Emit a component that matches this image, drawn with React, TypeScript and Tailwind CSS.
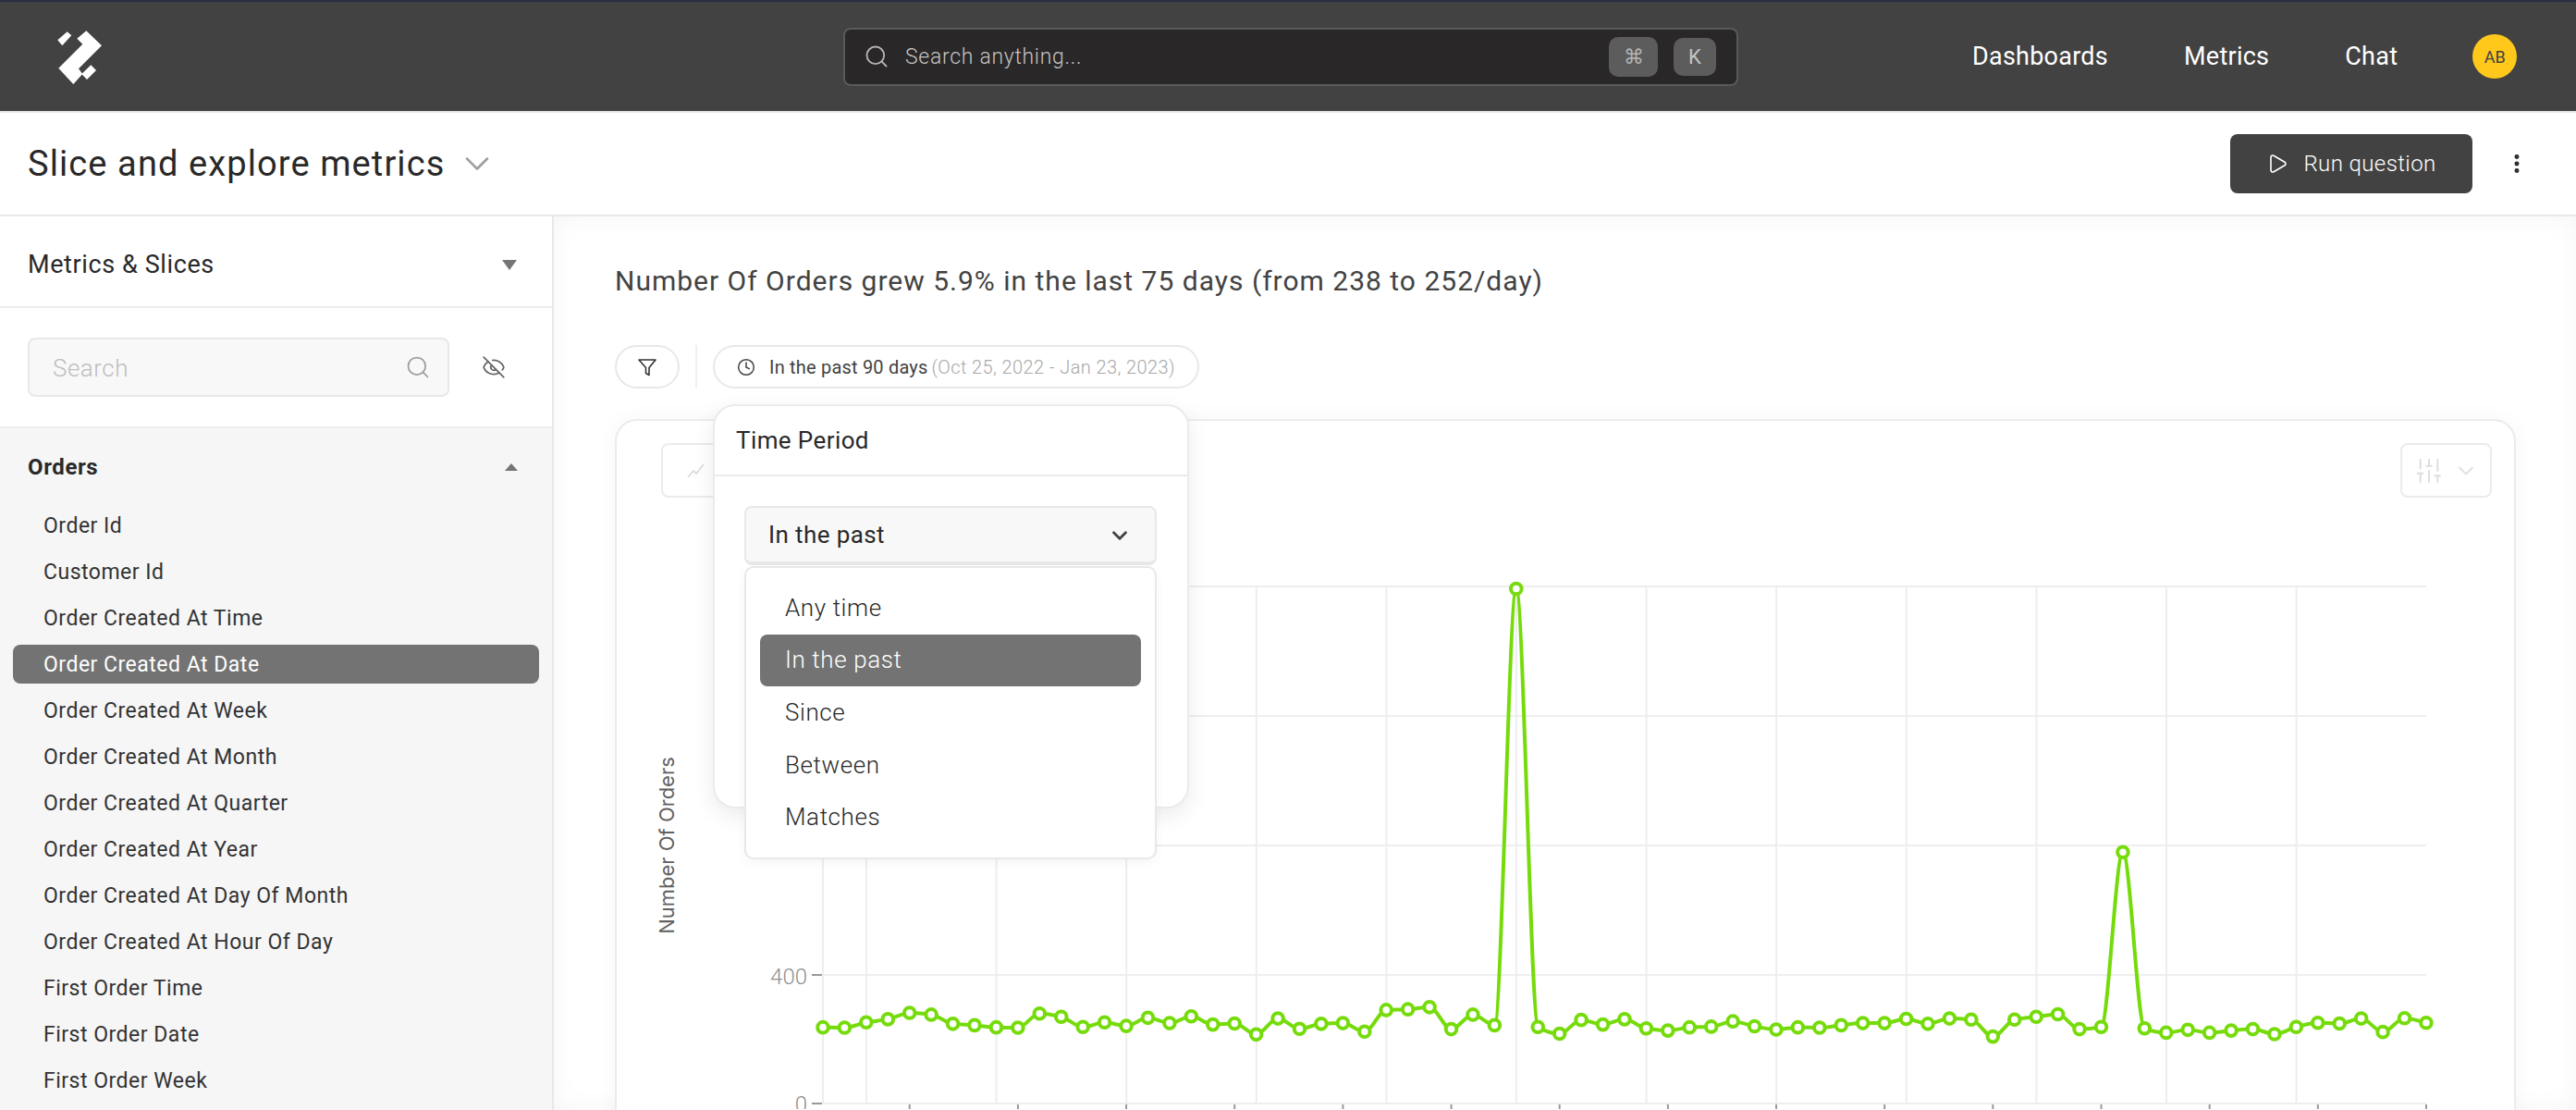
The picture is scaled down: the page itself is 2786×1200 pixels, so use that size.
import { ChevronDown, Clock, EyeOff, MoreVertical, Play, Search, SlidersVertical } from "lucide-react";

const orderFields = [
  "Order Id",
  "Customer Id",
  "Order Created At Time",
  "Order Created At Date",
  "Order Created At Week",
  "Order Created At Month",
  "Order Created At Quarter",
  "Order Created At Year",
  "Order Created At Day Of Month",
  "Order Created At Hour Of Day",
  "First Order Time",
  "First Order Date",
  "First Order Week",
];

const periods = ["Any time", "In the past", "Since", "Between", "Matches"];

// y of each day, read off the reference at a vertical zoom of 2.613
const rawY = [
  1337, 1338, 1323, 1314, 1296, 1301, 1327, 1331, 1337, 1338, 1298, 1307, 1336, 1323, 1333, 1310, 1325, 1306, 1329,
  1326, 1357, 1312, 1341, 1327, 1325, 1349, 1288, 1286, 1280, 1342, 1301, 1331, 98, 1336, 1355, 1316, 1329, 1314, 1340,
  1346, 1337, 1335, 1320, 1334, 1343, 1337, 1338, 1331, 1325, 1325, 1313, 1327, 1312, 1315, 1363, 1315, 1307, 1300,
  1342, 1336, 842, 1340, 1352, 1344, 1352, 1346, 1342, 1356, 1336, 1324, 1326, 1312, 1350, 1311, 1324,
];

const points = rawY.map((v, i) => ({ x: 890 + i * 23.432, y: 600 + v / 2.613 }));

// same shape as d3's curveMonotoneX
const monotonePath = (pts: { x: number; y: number }[]) => {
  const slopes = pts.slice(1).map((p, i) => (p.y - pts[i].y) / (p.x - pts[i].x));
  const tangents = pts.map((_, i) => {
    if (i === 0) return slopes[0];
    if (i === pts.length - 1) return slopes[i - 1];
    const a = slopes[i - 1];
    const b = slopes[i];
    if (a * b <= 0) return 0;
    return (2 * a * b) / (a + b);
  });
  let d = `M${pts[0].x} ${pts[0].y}`;
  for (let i = 1; i < pts.length; i++) {
    const h = (pts[i].x - pts[i - 1].x) / 3;
    d += `C${pts[i - 1].x + h} ${pts[i - 1].y + h * tangents[i - 1]} ${pts[i].x - h} ${pts[i].y - h * tangents[i]} ${pts[i].x} ${pts[i].y}`;
  }
  return d;
};

const gridY = [635, 775, 915, 1055, 1194];
const gridX = [890, ...Array.from({ length: 12 }, (_, i) => 937 + i * 140.6)];
const tickX = Array.from({ length: 15 }, (_, i) => 2624 - i * 117.16);

const Logo = () => (
  <svg width="110" height="100" viewBox="0 0 110 100" fill="#ffffff">
    <path d="M32.3 32.3L42.7 23.3L47.3 27.3L37.3 38.3Z" />
    <path d="M63.3 22.3L80 38.3L55 63.3L59.3 69L49.3 80L33.3 62.7L59.3 36.7L53.3 30.7Z" />
    <path d="M68.3 59.3L74 65L64 75L58.3 69Z" />
  </svg>
);

const Chart = () => (
  <svg width="2052" height="640" viewBox="667 560 2052 640" className="block">
    {gridY.map((y) => (
      <line key={y} x1="890" x2="2624" y1={y} y2={y} stroke="#eeeeee" strokeWidth="2" />
    ))}
    {gridX.map((x) => (
      <line key={x} x1={x} x2={x} y1="635" y2="1194" stroke="#eeeeee" strokeWidth="2" />
    ))}
    {tickX.map((x) => (
      <line key={x} x1={x} x2={x} y1="1195" y2="1200" stroke="#999999" strokeWidth="2" />
    ))}
    <line x1="878" x2="889" y1="1055" y2="1055" stroke="#999999" strokeWidth="2" />
    <line x1="878" x2="889" y1="1194" y2="1194" stroke="#999999" strokeWidth="2" />
    <text x="873" y="1065" textAnchor="end" fontFamily="Roboto, sans-serif" fontSize="24" fontWeight="300" fill="#8f8f8f">
      400
    </text>
    <text x="873" y="1203" textAnchor="end" fontFamily="Roboto, sans-serif" fontSize="24" fontWeight="300" fill="#8f8f8f">
      0
    </text>
    <text
      transform="translate(729 915) rotate(-90)"
      textAnchor="middle"
      fontFamily="Inter, sans-serif"
      fontSize="22"
      fill="#616161"
    >
      Number Of Orders
    </text>
    <path d={monotonePath(points)} fill="none" stroke="#76db0b" strokeWidth="4" />
    {points.map((p) => (
      <circle key={p.x} cx={p.x} cy={p.y} r="5.8" fill="#ffffff" stroke="#76db0b" strokeWidth="4" />
    ))}
  </svg>
);

const TimePeriodPopover = () => (
  <div className="absolute -left-[2px] top-[62px] z-10 h-[437px] w-[515px] rounded-[24px] border-2 border-[#ebebeb] bg-white shadow-[0_8px_24px_rgba(0,0,0,0.08)]">
    <div className="flex h-[76px] items-center border-b-2 border-[#ebebeb] pl-[23px] text-[26px] tracking-[0.4px] text-[#292929]">
      Time Period
    </div>
    <div className="relative ml-[32px] mt-[32px] flex h-[64px] w-[446px] items-center justify-between rounded-[8px] border-2 border-b-4 border-[#e8e8e8] bg-[#f8f8f8] pl-[24px] pr-[25px] pt-[1px] text-[26px] tracking-[0.4px] text-[#292929]">
      In the past
      <ChevronDown size={26} strokeWidth={2.6} className="text-[#424242]" />
      <div className="absolute -left-[2px] top-[63px] w-[446px] rounded-[10px] border-2 border-[#e8e8e8] bg-white py-[15px] shadow-[0_4px_12px_rgba(0,0,0,0.04)]">
        {periods.map((p) => (
          <div
            key={p}
            className={
              p === "In the past"
                ? "mx-[15px] flex h-[56.6px] items-center rounded-[8px] bg-[#737373] pl-[27px] font-light tracking-[0.6px] text-white"
                : "mx-[15px] flex h-[56.6px] items-center pl-[27px] font-light tracking-[0.6px] text-[#292929]"
            }
          >
            {p}
          </div>
        ))}
      </div>
    </div>
  </div>
);

export default function App() {
  return (
    <div className="flex h-[1200px] w-[2786px] flex-col overflow-hidden bg-white font-['Roboto',sans-serif] text-[#292929]">
      <header className="flex h-[122px] shrink-0 items-center border-b-2 border-t-2 border-b-[#e8e8e8] border-t-[#2b2d42] bg-[#424242] text-white">
        <div className="w-[912px] pl-[30px]">
          <Logo />
        </div>
        <div className="flex h-[63px] w-[968px] items-center rounded-[8px] border-2 border-[#5a5a5a] bg-[#292728] pl-[20px] pr-[22px]">
          <Search size={28} strokeWidth={1.6} className="text-[#b5b5b5]" />
          <span className="ml-[17px] flex-1 pt-[2px] text-[23px] font-light tracking-[0.7px] text-[#c4c4c4]">Search anything...</span>
          <span className="flex h-[43px] w-[53px] items-center justify-center rounded-[10px] bg-[#5c5c5c] text-[22px] text-[#b5b5b5]">
            ⌘
          </span>
          <span className="ml-[17px] flex h-[41px] w-[46px] items-center justify-center rounded-[10px] bg-[#5c5c5c] text-[22px] text-[#c4c4c4]">
            K
          </span>
        </div>
        <nav className="ml-[253px] flex items-center gap-[82px] text-[27px] tracking-[0.25px]">
          <span>Dashboards</span>
          <span>Metrics</span>
          <span>Chat</span>
        </nav>
        <div className="ml-[81px] flex h-[48px] w-[48px] items-center justify-center rounded-full bg-[#ffc81a] text-[18px] text-[#424242]">
          AB
        </div>
      </header>

      <div className="flex h-[112px] shrink-0 items-center border-b-2 border-[#e8e8e8] pl-[30px]">
        <h1 className="text-[38px] font-normal tracking-[1.1px]">Slice and explore metrics</h1>
        <ChevronDown size={44} strokeWidth={1.4} className="ml-[13px] text-[#9e9e9e]" />
        <button className="ml-auto flex h-[64px] w-[262px] items-center justify-center gap-[16px] rounded-[8px] bg-[#424242] text-[24px] font-light tracking-[0.4px] text-white">
          <Play size={24} strokeWidth={1.6} />
          Run question
        </button>
        <MoreVertical size={26} strokeWidth={2.6} className="ml-[35px] mr-[51px] text-[#292929]" />
      </div>

      <div className="flex min-h-0 flex-1">
        <aside className="flex w-[599px] shrink-0 flex-col border-r-2 border-[#e8e8e8]">
          <div className="flex h-[99px] shrink-0 items-center justify-between border-b-2 border-[#eeeeee] pl-[30px] pr-[38px] pt-[8px] text-[27px] tracking-[0.6px]">
            Metrics &amp; Slices
            <span className="h-0 w-0 border-x-[8px] border-t-[11px] border-x-transparent border-t-[#757575]" />
          </div>
          <div className="flex h-[130px] shrink-0 items-center border-b-2 border-[#eeeeee] pl-[30px]">
            <div className="flex h-[64px] w-[456px] items-center justify-between rounded-[8px] border-2 border-[#e8e8e8] bg-[#f8f8f8] pl-[25px] pr-[18px] text-[26px] font-light tracking-[0.5px] text-[#bdbdbd]">
              <span className="pt-[2px]">Search</span>
              <Search size={28} strokeWidth={1.5} className="text-[#9e9e9e]" />
            </div>
            <EyeOff size={26} strokeWidth={1.5} className="ml-[35px] text-[#616161]" />
          </div>
          <div className="flex-1 bg-[#f6f6f6]">
            <div className="flex h-[84px] items-center justify-between pl-[30px] pr-[37px] text-[24px] font-bold tracking-[0.6px]">
              Orders
              <span className="h-0 w-0 border-x-[7px] border-b-[8px] border-x-transparent border-b-[#757575]" />
            </div>
            <div className="flex flex-col gap-[8px]">
              {orderFields.map((f) => (
                <div
                  key={f}
                  className={
                    f === "Order Created At Date"
                      ? "mx-[14px] flex h-[42px] shrink-0 items-center rounded-[8px] bg-[#737373] pl-[33px] pt-[3px] text-[23px] tracking-[0.5px] text-white"
                      : "mx-[14px] flex h-[42px] shrink-0 items-center pl-[33px] pt-[3px] text-[23px] tracking-[0.5px] text-[#333333]"
                  }
                >
                  {f}
                </div>
              ))}
            </div>
          </div>
        </aside>

        <main className="min-w-0 flex-1 pl-[66px] pr-[65px] shadow-[inset_0_0_28px_rgba(0,0,0,0.045)]">
          <h2 className="flex h-[138px] items-center text-[30px] font-normal tracking-[1px] text-[#424242]">
            Number Of Orders grew 5.9% in the last 75 days (from 238 to 252/day)
          </h2>
          <div className="mt-[1px] flex items-center">
            <div className="flex h-[47px] w-[70px] items-center justify-center rounded-full border-2 border-[#e8e8e8]">
              <svg width="22" height="22" viewBox="0 0 22 22" fill="none" stroke="#333333" strokeWidth="1.6" strokeLinejoin="round">
                <path d="M2 3H20L13 11.5V19.5L9.5 17.5V11.5Z" />
              </svg>
            </div>
            <div className="ml-[17px] h-[47px] w-[2px] bg-[#f0f0f0]" />
            <div className="relative ml-[17px] flex h-[47px] w-[526px] items-center rounded-full border-2 border-[#e8e8e8] pl-[24px] text-[20px]">
              <Clock size={20} strokeWidth={1.8} className="text-[#424242]" />
              <span className="ml-[15px] tracking-[0.2px] text-[#424242]">In the past 90 days</span>
              <span className="ml-[4px] font-light tracking-[0.4px] text-[#a8a8a8]">(Oct 25, 2022 - Jan 23, 2023)</span>
              <TimePeriodPopover />
            </div>
          </div>
          <section className="mt-[33px] h-[900px] rounded-[24px] border-2 border-[#ebebeb] bg-white shadow-[0_0_24px_rgba(0,0,0,0.04)]">
            <div className="flex h-[104px] items-start justify-between pl-[48px] pr-[24px] pt-[24px]">
              <div className="flex h-[59px] w-[99px] items-center rounded-[8px] border-2 border-[#ebebeb] pl-[26px]">
                <svg width="20" height="16" viewBox="0 0 20 16" fill="none" stroke="#d9d9d9" strokeWidth="1.6">
                  <path d="M1 15L7 8L10 11L18 1" />
                </svg>
              </div>
              <div className="flex h-[59px] w-[99px] items-center justify-center gap-[10px] rounded-[8px] border-2 border-[#ebebeb] text-[#dddddd]">
                <SlidersVertical size={32} strokeWidth={1.5} />
                <ChevronDown size={28} strokeWidth={1.5} />
              </div>
            </div>
            <Chart />
          </section>
        </main>
      </div>
    </div>
  );
}
